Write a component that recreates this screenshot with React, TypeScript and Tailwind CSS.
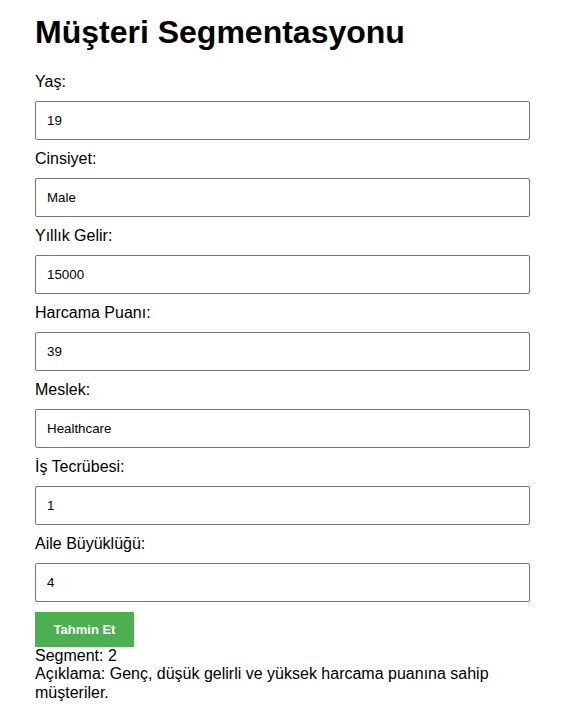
const fields = [
  { label: "Yaş:", value: "19" },
  { label: "Cinsiyet:", value: "Male" },
  { label: "Yıllık Gelir:", value: "15000" },
  { label: "Harcama Puanı:", value: "39" },
  { label: "Meslek:", value: "Healthcare" },
  { label: "İş Tecrübesi:", value: "1" },
  { label: "Aile Büyüklüğü:", value: "4" },
];

export default function App() {
  return (
    <div className="min-h-screen bg-white text-black font-['Liberation_Sans',Arial,sans-serif]">
      <div className="w-[495px] ml-[35px] pt-[14px]">
        <h1 className="text-[32px] font-bold leading-[37px] mb-[22px]">
          Müşteri Segmentasyonu
        </h1>

        <form onSubmit={(e) => e.preventDefault()}>
          {fields.map((f) => (
            <div key={f.label}>
              <label className="block text-[16px] leading-[18px] mb-[10px]">
                {f.label}
              </label>
              <input
                type="text"
                defaultValue={f.value}
                className="block w-full h-[39px] px-[11px] text-[13.33px] border border-[#767676] rounded-[2px] mb-[10px] outline-none"
              />
            </div>
          ))}

          <button
            type="submit"
            className="block mt-px w-[99px] bg-[#4CAF50] text-white text-[13px] leading-[15px] py-[10px] font-semibold"
          >
            Tahmin Et
          </button>
        </form>

        {/* Sonuç */}
        <div className="w-[473px] text-[16px] leading-[18.4px]">
          <div>Segment: 2</div>
          <div>Açıklama: Genç, düşük gelirli ve yüksek harcama puanına sahip müşteriler.</div>
        </div>
      </div>
    </div>
  );
}
